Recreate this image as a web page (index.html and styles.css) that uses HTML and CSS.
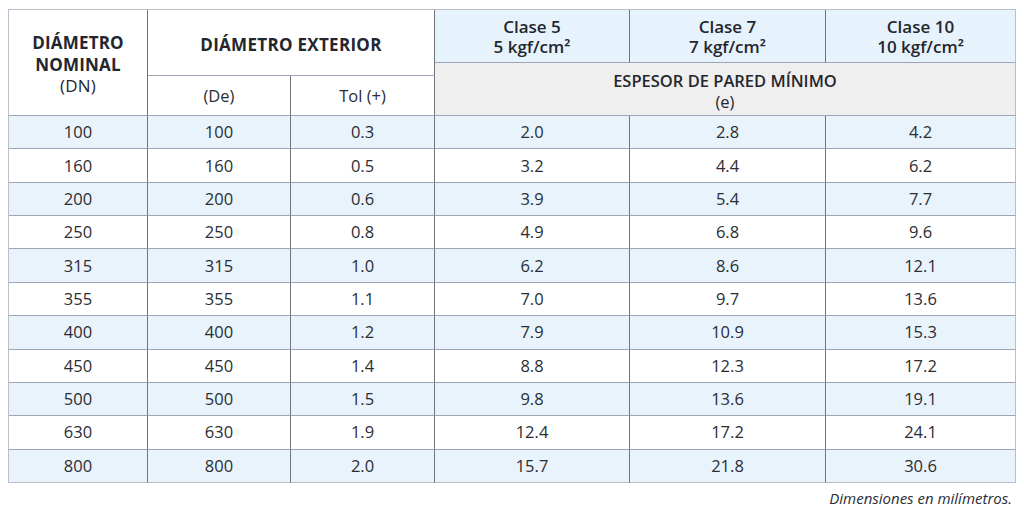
FILE: index.html
```html
<!DOCTYPE html>
<html lang="es">
<head>
<meta charset="utf-8">
<title>Tabla de espesores</title>
<link rel="stylesheet" href="styles.css">
</head>
<body>
<div class="page">
  <div class="grid">
    <div class="c h-dn"><div>DIÁMETRO<br>NOMINAL<br><span class="reg">(DN)</span></div></div>
    <div class="c h-de"><div>DIÁMETRO EXTERIOR</div></div>
    <div class="c h-cl h-c1"><div>Clase 5<br>5 kgf/cm²</div></div>
    <div class="c h-cl h-c2"><div>Clase 7<br>7 kgf/cm²</div></div>
    <div class="c h-cl h-c3 last"><div>Clase 10<br>10 kgf/cm²</div></div>
    <div class="c h-sub h-s1"><div>(De)</div></div>
    <div class="c h-sub h-s2"><div>Tol (+)</div></div>
    <div class="c h-esp last"><div>ESPESOR DE PARED MÍNIMO<br><span class="reg">(e)</span></div></div>

    <div class="c b">100</div><div class="c b">100</div><div class="c b">0.3</div><div class="c b">2.0</div><div class="c b">2.8</div><div class="c b last">4.2</div>
    <div class="c">160</div><div class="c">160</div><div class="c">0.5</div><div class="c">3.2</div><div class="c">4.4</div><div class="c last">6.2</div>
    <div class="c b">200</div><div class="c b">200</div><div class="c b">0.6</div><div class="c b">3.9</div><div class="c b">5.4</div><div class="c b last">7.7</div>
    <div class="c">250</div><div class="c">250</div><div class="c">0.8</div><div class="c">4.9</div><div class="c">6.8</div><div class="c last">9.6</div>
    <div class="c b">315</div><div class="c b">315</div><div class="c b">1.0</div><div class="c b">6.2</div><div class="c b">8.6</div><div class="c b last">12.1</div>
    <div class="c">355</div><div class="c">355</div><div class="c">1.1</div><div class="c">7.0</div><div class="c">9.7</div><div class="c last">13.6</div>
    <div class="c b">400</div><div class="c b">400</div><div class="c b">1.2</div><div class="c b">7.9</div><div class="c b">10.9</div><div class="c b last">15.3</div>
    <div class="c">450</div><div class="c">450</div><div class="c">1.4</div><div class="c">8.8</div><div class="c">12.3</div><div class="c last">17.2</div>
    <div class="c b">500</div><div class="c b">500</div><div class="c b">1.5</div><div class="c b">9.8</div><div class="c b">13.6</div><div class="c b last">19.1</div>
    <div class="c">630</div><div class="c">630</div><div class="c">1.9</div><div class="c">12.4</div><div class="c">17.2</div><div class="c last">24.1</div>
    <div class="c b lastrow">800</div><div class="c b lastrow">800</div><div class="c b lastrow">2.0</div><div class="c b lastrow">15.7</div><div class="c b lastrow">21.8</div><div class="c b lastrow last">30.6</div>
  </div>
  <p class="note">Dimensiones en milímetros.</p>
</div>
</body>
</html>
```

FILE: styles.css
```css
html, body {
  margin: 0;
  padding: 0;
  background: #ffffff;
}

.page {
  padding: 9px 0 0 8px;
  width: 1008px;
  font-family: "Open Sans", "Noto Sans", "Liberation Sans", sans-serif;
  color: #2b2d33;
}

.grid {
  display: grid;
  box-sizing: border-box;
  width: 1008px;
  height: 474px;
  grid-template-columns: 139px 143px 144px 195px 196px 190px;
  grid-template-rows: 53px 13px 40px repeat(11, 1fr);
  border-top: 1px solid #b9bec9;
  border-left: 1px solid #b9bec9;
}

.c {
  box-sizing: border-box;
  display: flex;
  align-items: center;
  justify-content: center;
  text-align: center;
  border-right: 1px solid #70747e;
  border-bottom: 1px solid #9ea6b6;
  font-size: 16.5px;
  font-weight: 400;
  line-height: 20px;
  background: #ffffff;
}

.c.last {
  border-right-color: #b9bec9;
}

.c.lastrow {
  border-bottom-color: #b9bec9;
}

.c.b {
  background: #e8f3fc;
}

.h-dn {
  grid-column: 1;
  grid-row: 1 / 4;
  font-weight: 700;
  font-size: 17px;
  line-height: 21.5px;
  letter-spacing: 0.2px;
  color: #24262d;
  padding-top: 4px;
}

.h-de {
  grid-column: 2 / 4;
  grid-row: 1 / 3;
  font-weight: 700;
  font-size: 17px;
  letter-spacing: 0.3px;
  color: #24262d;
  padding-top: 5px;
}

.h-cl {
  grid-row: 1;
  background: #e7f3fc;
  font-weight: 600;
  font-size: 17px;
  line-height: 20px;
  color: #24262d;
  padding-top: 1px;
}

.h-c1 { grid-column: 4; }
.h-c2 { grid-column: 5; }
.h-c3 { grid-column: 6; }

.h-sub {
  grid-row: 3;
  font-size: 16.5px;
}

.h-s1 { grid-column: 2; }
.h-s2 { grid-column: 3; }

.h-esp {
  grid-column: 4 / 7;
  grid-row: 2 / 4;
  background: #efefef;
  font-weight: 600;
  font-size: 16.5px;
  line-height: 21px;
  color: #24262d;
  padding-top: 3px;
}

.reg {
  font-weight: 400;
}

.note {
  margin: 0;
  padding: 6px 4px 0 0;
  text-align: right;
  font-style: italic;
  font-size: 15px;
  line-height: 18px;
  color: #2b2d33;
}
```
